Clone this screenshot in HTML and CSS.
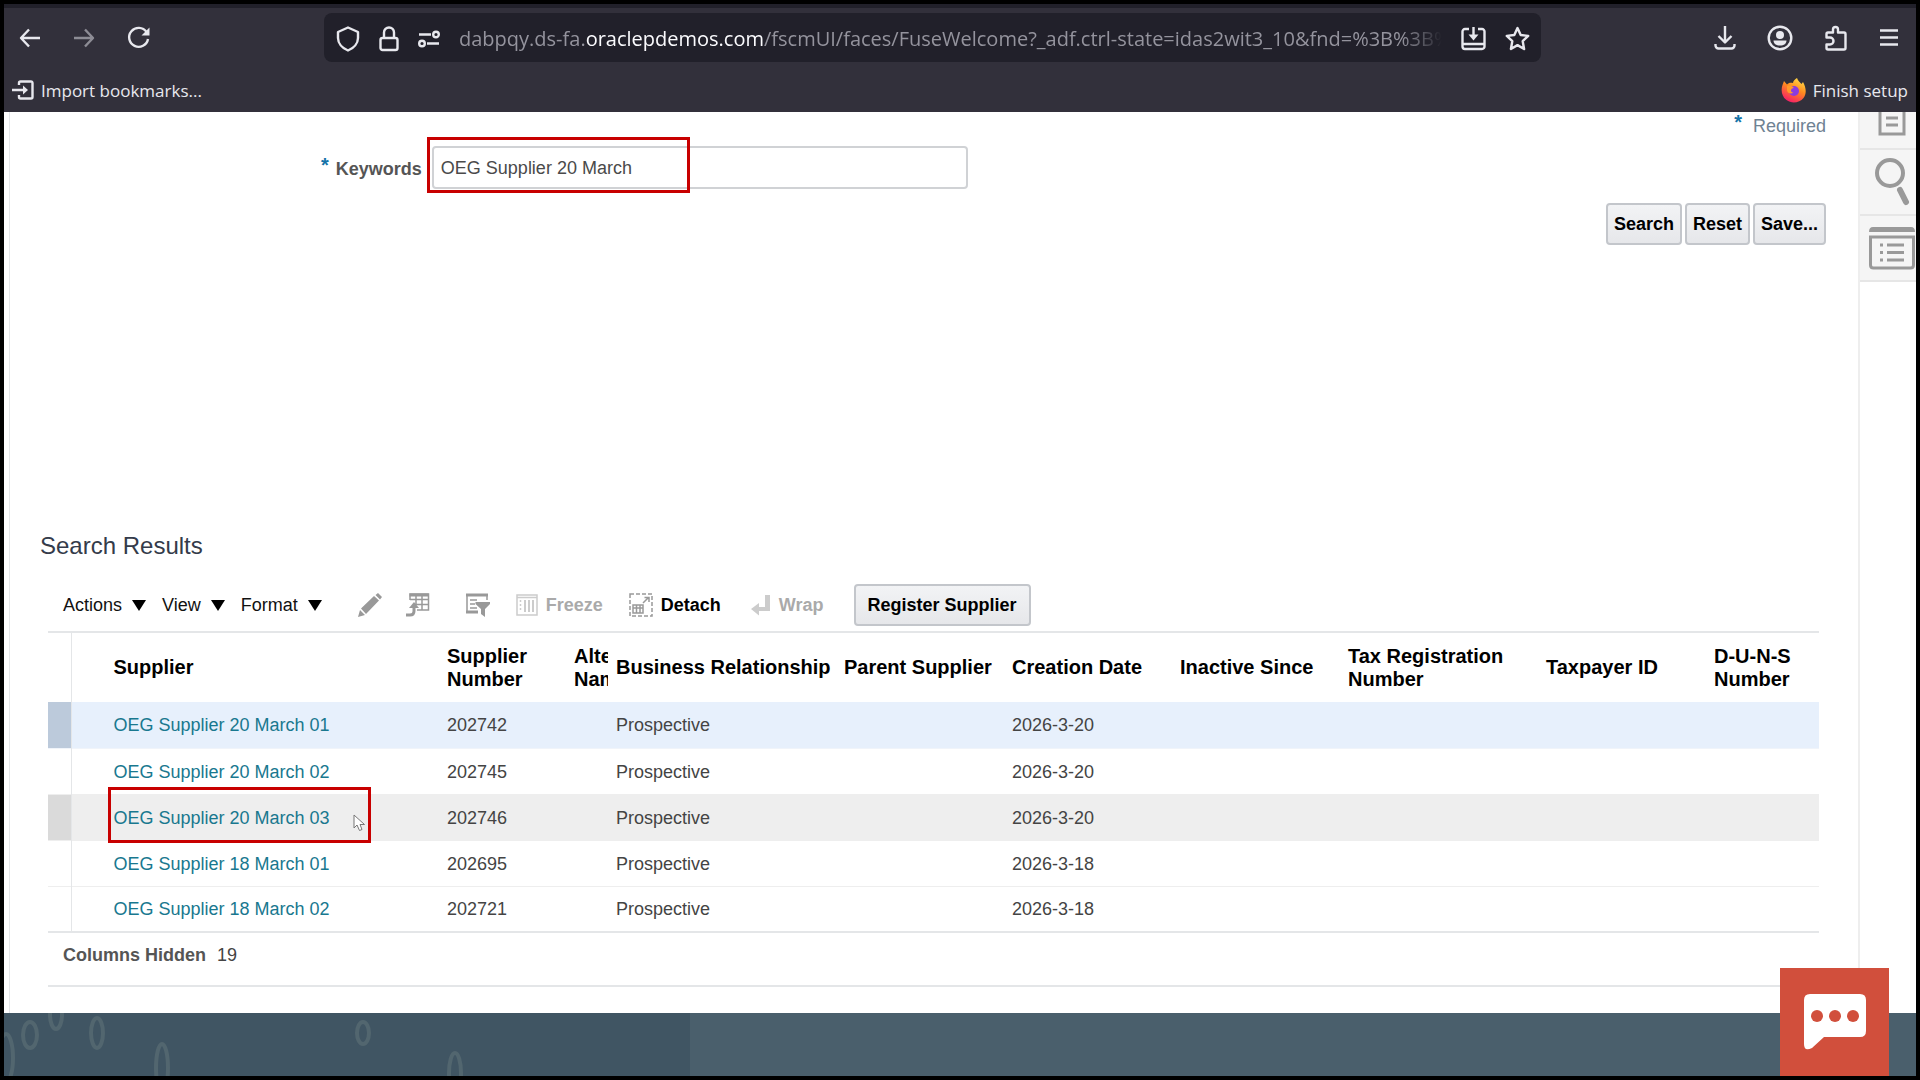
FILE: index.html
```html
<!DOCTYPE html>
<html lang="en">
<head>
  <meta charset="UTF-8">
  <title>Manage Suppliers</title>
  <meta name="viewport" content="width=device-width, initial-scale=1">
  <link rel="stylesheet" href="styles.css">
</head>
<body>

<div class="window">

  <header class="browser">
    <div class="nav-bar">
      <div class="nav-buttons">
        <button class="icon-btn" aria-label="Back">
          <svg width="22" height="24" viewBox="0 0 22 24"><path d="M21 12H2M10 3.5L2 12l8 8.5"/></svg>
        </button>
        <button class="icon-btn dim" aria-label="Forward">
          <svg width="22" height="24" viewBox="0 0 22 24"><path d="M1 12h19M12 3.5l8 8.5-8 8.5"/></svg>
        </button>
        <button class="icon-btn" aria-label="Reload">
          <svg width="24" height="24" viewBox="0 0 24 24"><path d="M19.500 6A9.500 9.500 0 1 0 21 13"/><path class="solid" d="M22.500 1.500v8h-8z"/></svg>
        </button>
      </div>

      <div class="url-bar">
        <svg width="24" height="26" viewBox="0 0 24 26"><path d="M12 1.500L22 6v6c0 5-4 10-10 12.500C6 22 2 17 2 12V6z"/></svg>
        <svg width="20" height="26" viewBox="0 0 20 26"><rect x="1.500" y="12" width="17" height="12" rx="2"/><path d="M5 12V6.500a5 5 0 0 1 10 0V12"/></svg>
        <svg width="22" height="26" viewBox="0 0 22 26"><path d="M1 8.500h12M9 17.500h12"/><circle cx="18" cy="8.500" r="2.800"/><circle cx="4" cy="17.500" r="2.800"/></svg>
        <div class="url">dabpqy.ds-fa.<b>oraclepdemos.com</b>/fscmUI/faces/FuseWelcome?_adf.ctrl-state=idas2wit3_10&amp;fnd=%3B%3B%3</div>
        <button class="icon-btn" aria-label="Install">
          <svg width="25" height="26" viewBox="0 0 25 26"><path d="M8 3H4a2.500 2.500 0 0 0-2.500 2.500v15A2.500 2.500 0 0 0 4 23h17a2.500 2.500 0 0 0 2.500-2.500v-15A2.500 2.500 0 0 0 21 3h-4M1.500 18h22M12.500 1v10"/><path class="solid" d="M7.500 8.500h10l-5 6z"/></svg>
        </button>
        <button class="icon-btn" aria-label="Bookmark this page">
          <svg width="25" height="26" viewBox="0 0 25 26"><path d="M12.500 2l3.200 7 7.500.9-5.500 5.300 1.400 7.800-6.600-3.900L5.900 23l1.400-7.800L1.800 9.900l7.500-.9z"/></svg>
        </button>
      </div>

      <div class="tools">
        <button class="icon-btn" aria-label="Downloads">
          <svg width="22" height="26" viewBox="0 0 22 26"><path d="M11 1v16M4.500 11l6.500 6.500 6.500-6.500M1.500 19v1.500a3 3 0 0 0 3 3h13a3 3 0 0 0 3-3V19"/></svg>
        </button>
        <button class="icon-btn" aria-label="Account">
          <svg width="26" height="26" viewBox="0 0 26 26"><circle cx="13" cy="13" r="11.300"/><circle class="solid" cx="13" cy="10" r="4"/><path class="solid" d="M6.500 15.500h13c0 3-2.500 5-6.500 5s-6.500-2-6.500-5z"/></svg>
        </button>
        <button class="icon-btn" aria-label="Extensions">
          <svg width="24" height="26" viewBox="0 0 24 26"><path d="M2.500 12.500V9A1.500 1.500 0 0 1 4 7.500h5V4.500a2.500 2.500 0 0 1 5 0v3h6A1.500 1.500 0 0 1 21.500 9v14A1.500 1.500 0 0 1 20 24.500H4A1.500 1.500 0 0 1 2.500 23v-3.500H6a3 3 0 0 0 0-7z"/></svg>
        </button>
        <button class="icon-btn" aria-label="Menu">
          <svg width="20" height="26" viewBox="0 0 20 26"><path d="M1 5.500h18M1 12.500h18M1 19.500h18"/></svg>
        </button>
      </div>
    </div>

    <div class="bookmarks">
      <a href="#">
        <svg width="22" height="20" viewBox="0 0 22 20"><path d="M7 5V3a1.500 1.500 0 0 1 1.500-1.500h10A1.500 1.500 0 0 1 20.500 3v14a1.500 1.500 0 0 1-1.500 1.500H8.500A1.500 1.500 0 0 1 7 17v-2M0 10h12"/><path class="solid" d="M11 5.500l5 4.500-5 4.500z"/></svg>
        Import bookmarks...
      </a>
      <a href="#">
        <svg class="firefox" width="25" height="25" viewBox="0 0 25 25">
          <defs>
            <linearGradient id="flame" x1="0.800" y1="0" x2="0.300" y2="1">
              <stop offset="0" stop-color="#ffe14a"/>
              <stop offset="0.450" stop-color="#ff8a1f"/>
              <stop offset="1" stop-color="#f5196a"/>
            </linearGradient>
          </defs>
          <path fill="url(#flame)" d="M16 0c1 3 3 4 4.500 6L22 4c3 5 4 12 .5 16-4 5-12 6-17 2C0 18 0 11 1.500 7L3 3l3 3.500C7.500 5 9 4.500 12 5c0-2 2-4 4-5z"/>
          <circle cx="13" cy="13" r="5" fill="#8a3be0"/>
          <path fill="#ff9a2a" d="M6 8c3-1 5 0 7 2-2 0-3 1-3 2.500 0 1.500 1 2 2.500 2-2 2-6 1-6.500-2z"/>
        </svg>
        Finish setup
      </a>
    </div>
  </header>

  <div class="page">
    <main class="content">
      <p class="required"><span class="star">*</span> Required</p>

      <form class="search-form">
        <div class="field">
          <label for="keywords"><span class="star">*</span> Keywords</label>
          <div class="input-wrap">
            <input type="text" id="keywords" value="OEG Supplier 20 March">
            <span class="marker"></span>
          </div>
        </div>
        <div class="form-buttons">
          <button type="button" class="btn">Search</button>
          <button type="button" class="btn">Reset</button>
          <button type="button" class="btn">Save...</button>
        </div>
      </form>

      <section class="results">
        <h2>Search Results</h2>

        <div class="toolbar">
          <div class="menus">
            <button class="menu">Actions</button>
            <button class="menu">View</button>
            <button class="menu">Format</button>
          </div>
          <button class="tool edit" aria-label="Edit">
            <svg width="24" height="24" viewBox="0 0 24 24" fill="#999"><path d="M0 24l2-7 5 5zM3 15.500L16 3l5 4.500L8 21zM17.500 2L20 0l4 4-2 2.500z"/></svg>
          </button>
          <button class="tool export" aria-label="Export to Excel">
            <svg width="24" height="24" viewBox="0 0 24 24" fill="none" stroke="#999" stroke-width="1.500"><path d="M4 7V1h18.500v16H11M4 6.500h18.500M10 1v10M16 1v16M9 11.500h13.500"/><path stroke-width="3" d="M3.500 2h19M0 22h4c3 0 4-1.500 4-4v-4"/><path fill="#999" stroke="none" d="M3 15l5-6 5 6z"/></svg>
          </button>
          <button class="tool query" aria-label="Query by Example">
            <svg width="24" height="24" viewBox="0 0 24 24" fill="none" stroke="#999" stroke-width="1.500"><path d="M1 1v18h11M21 1v6M4 7h7M4 11h5M4 15h7"/><path stroke-width="3" d="M0 2h22M0 19h12"/><path fill="#999" stroke="none" d="M9.500 9H24v2l-5 5v8l-4-3v-5l-5.500-5z"/></svg>
          </button>
          <button class="tool freeze" disabled>
            <svg width="22" height="22" viewBox="0 0 22 22" fill="none" stroke="#ccc" stroke-width="1.500"><path d="M1 1h20v20H1zM1 3.500h20"/><path d="M4.500 6v12" stroke-dasharray="2 2"/><path stroke-width="2" d="M9 6v12M13 6v12M17 6v12"/></svg>
            Freeze
          </button>
          <button class="tool detach">
            <svg width="24" height="24" viewBox="0 0 24 24" fill="none" stroke="#999" stroke-width="1.500"><path stroke-dasharray="4 2" d="M1 1h22v22H1z"/><path d="M4 12h10v8H4zM4 15h10M7.500 12v8M11 12v8M14 10l5-5M15.500 4.500H20V9"/></svg>
            Detach
          </button>
          <button class="tool wrap" disabled>
            <svg width="20" height="22" viewBox="0 0 20 22" fill="#ccc"><path d="M14 1h5v16H8v4.500L0 15l8-6v4h6z"/></svg>
            Wrap
          </button>
          <button class="btn register">Register Supplier</button>
        </div>

        <table>
          <colgroup>
            <col class="col-mark">
            <col class="col-supplier">
            <col class="col-number">
            <col class="col-alt">
            <col class="col-business">
            <col class="col-mid">
            <col class="col-mid">
            <col class="col-mid">
            <col class="col-tax">
            <col class="col-mid">
            <col class="col-duns">
          </colgroup>
          <thead>
            <tr>
              <td></td>
              <th>Supplier</th>
              <th>Supplier Number</th>
              <th>Alternate Name</th>
              <th>Business Relationship</th>
              <th>Parent Supplier</th>
              <th>Creation Date</th>
              <th>Inactive Since</th>
              <th>Tax Registration Number</th>
              <th>Taxpayer ID</th>
              <th>D-U-N-S Number</th>
            </tr>
          </thead>
          <tbody>
            <tr class="selected">
              <td></td>
              <td><a href="#">OEG Supplier 20 March 01</a></td>
              <td>202742</td>
              <td></td>
              <td>Prospective</td>
              <td></td>
              <td>2026-3-20</td>
              <td></td><td></td><td></td><td></td>
            </tr>
            <tr>
              <td></td>
              <td><a href="#">OEG Supplier 20 March 02</a></td>
              <td>202745</td>
              <td></td>
              <td>Prospective</td>
              <td></td>
              <td>2026-3-20</td>
              <td></td><td></td><td></td><td></td>
            </tr>
            <tr class="hovered">
              <td></td>
              <td>
                <a href="#">OEG Supplier 20 March 03</a>
                <span class="marker"></span>
                <svg class="cursor" width="13" height="18" viewBox="0 0 13 18"><path d="M1 1v13l3-3 2.500 5.500 2.500-1L7 10.500h4.500z" fill="#fff" stroke="#777"/></svg>
              </td>
              <td>202746</td>
              <td></td>
              <td>Prospective</td>
              <td></td>
              <td>2026-3-20</td>
              <td></td><td></td><td></td><td></td>
            </tr>
            <tr>
              <td></td>
              <td><a href="#">OEG Supplier 18 March 01</a></td>
              <td>202695</td>
              <td></td>
              <td>Prospective</td>
              <td></td>
              <td>2026-3-18</td>
              <td></td><td></td><td></td><td></td>
            </tr>
            <tr>
              <td></td>
              <td><a href="#">OEG Supplier 18 March 02</a></td>
              <td>202721</td>
              <td></td>
              <td>Prospective</td>
              <td></td>
              <td>2026-3-18</td>
              <td></td><td></td><td></td><td></td>
            </tr>
          </tbody>
        </table>

        <p class="hidden-cols"><b>Columns Hidden</b> 19</p>
      </section>
    </main>

    <aside class="rail">
      <button aria-label="Notes">
        <svg width="28" height="24" viewBox="0 0 28 24" fill="none" stroke="#999" stroke-width="3"><path d="M2 0v22h24V0M8 6h12M8 13h12"/></svg>
      </button>
      <button aria-label="Search">
        <svg width="36" height="48" viewBox="0 0 36 48" fill="none" stroke="#999" stroke-width="4"><circle cx="16" cy="15" r="13"/><path stroke-width="6" stroke-linecap="round" d="M26 32l6 12"/></svg>
      </button>
      <button aria-label="Worklist">
        <svg width="46" height="44" viewBox="0 0 46 44" fill="none" stroke="#999" stroke-width="3"><path fill="#999" stroke="none" d="M0 6q0-5 4-5h38q4 0 4 5z"/><path d="M1.500 11h43v28q0 3-3 3h-37q-3 0-3-3zM18 19h17M18 26.500h17M18 34h17M11 19h3M11 26.500h3M11 34h3"/></svg>
      </button>
    </aside>
  </div>

  <footer class="backdrop">
    <svg width="480" height="63" viewBox="0 0 480 63" fill="none" stroke="#52666f" stroke-width="4">
      <ellipse cx="2" cy="45" rx="7" ry="24"/>
      <ellipse cx="26" cy="22" rx="7" ry="13"/>
      <ellipse cx="52" cy="2" rx="6" ry="14"/>
      <ellipse cx="93" cy="20" rx="6" ry="15"/>
      <ellipse cx="158" cy="55" rx="6" ry="24"/>
      <ellipse cx="359" cy="20" rx="6" ry="11"/>
      <ellipse cx="451" cy="60" rx="6" ry="20"/>
    </svg>
  </footer>

  <button class="chat" aria-label="Open chat">
    <svg width="62" height="56" viewBox="0 0 62 56"><path fill="#fff" d="M6 0h50q6 0 6 6v31q0 6-6 6H20L8 54q-8 4-8-4V6q0-6 6-6z"/><g fill="#d14f3c"><circle cx="13" cy="22" r="6"/><circle cx="31" cy="22" r="6"/><circle cx="49" cy="22" r="6"/></g></svg>
  </button>

</div>

</body>
</html>
```
FILE: styles.css
```css
:root {
  --chrome: #32303b;
  --chrome-dark: #21202a;
  --chrome-text: #e8e8ee;
  --link: #19788f;
  --text: #444;
  --line: #e4e6e8;
  --mark: #c80000;
}

* {
  box-sizing: border-box;
}

body {
  margin: 0;
  padding: 4px;
  min-height: 100vh;
  display: flex;
  background-color: #000;
  color: var(--text);
  font-family: "Liberation Sans", Arial, sans-serif;
  font-size: 18px;
}

button {
  padding: 0;
  border: none;
  background: none;
  font: inherit;
  color: inherit;
  cursor: pointer;
}

svg {
  display: block;
  flex: none;
}

p, h2 {
  margin: 0;
}

a {
  color: var(--link);
  text-decoration: none;
}

.window {
  position: relative;
  flex: 1;
  min-width: 0;
  display: flex;
  flex-direction: column;
  overflow: hidden;
}

/* browser chrome */

.browser {
  background-color: var(--chrome);
  border-top: 4px solid var(--chrome-dark);
  color: var(--chrome-text);
  font-family: "Open Sans", "Noto Sans", sans-serif;
}

.browser svg {
  fill: none;
  stroke: var(--chrome-text);
  stroke-width: 2.4;
  stroke-linejoin: round;
}

.browser .solid {
  fill: var(--chrome-text);
  stroke: none;
}

.browser .firefox {
  stroke: none;
}

.browser .dim {
  opacity: 0.5;
}

.nav-bar {
  display: flex;
  align-items: center;
  padding: 5px 17px 0 15px;
}

.nav-buttons {
  display: flex;
  gap: 32px;
  width: 305px;
}

.url-bar {
  flex: 1;
  min-width: 0;
  max-width: 1217px;
  height: 49px;
  display: flex;
  align-items: center;
  gap: 19px;
  padding: 2px 11px 0 12px;
  border-radius: 8px;
  background-color: var(--chrome-dark);
}

.url {
  flex: 1;
  min-width: 0;
  overflow: hidden;
  white-space: nowrap;
  font-size: 20px;
  color: #94939d;
  mask-image: linear-gradient(to right, #000 calc(100% - 40px), transparent);
}

.url b {
  font-weight: normal;
  color: #fbfbfe;
}

.tools {
  display: flex;
  gap: 31px;
  margin-left: auto;
}

.bookmarks {
  display: flex;
  justify-content: space-between;
  align-items: center;
  height: 50px;
  padding: 6px 8px 0;
  font-size: 17px;
}

.bookmarks a {
  display: flex;
  align-items: center;
  gap: 7px;
  color: var(--chrome-text);
}

/* page */

.page {
  flex: 1;
  display: flex;
  padding-left: 5px;
  background-color: #fff;
}

.content {
  flex: 1;
  min-width: 0;
  border-left: 1px solid var(--line);
  border-right: 2px solid #eee;
  padding: 0 32px 0 30px;
}

.star {
  color: #1573a8;
  font-size: 20px;
  font-weight: bold;
  line-height: 1;
  vertical-align: 3px;
  margin-right: 2px;
}

.required {
  height: 25px;
  line-height: 26px;
  text-align: right;
  color: #6f8293;
}

.required .star {
  margin-right: 6px;
}

.field {
  display: flex;
  align-items: center;
  gap: 10px;
  margin: 9px 0 14px 281px;
}

.field label {
  font-weight: bold;
  color: #555;
}

.input-wrap {
  position: relative;
  flex: 0 1 536px;
}

.input-wrap input {
  display: block;
  width: 100%;
  height: 43px;
  padding: 2px 7px 0;
  border: 2px solid #d0d2d5;
  border-radius: 4px;
  font: inherit;
  color: #4a4a4a;
}

.marker {
  position: absolute;
  top: -9px;
  left: -5px;
  width: 263px;
  height: 56px;
  border: 3px solid var(--mark);
  pointer-events: none;
}

.form-buttons {
  display: flex;
  justify-content: flex-end;
  gap: 3px;
}

.btn {
  height: 42px;
  padding: 0 6px;
  border: 2px solid #c3c6cb;
  border-radius: 4px;
  background: linear-gradient(#f2f3f5, #e6e7ea);
  font-weight: bold;
  color: #000;
}

.results {
  margin-top: 287px;
}

.results h2 {
  font-size: 24px;
  font-weight: normal;
  line-height: 28px;
  color: #343b4a;
}

.toolbar {
  display: flex;
  align-items: center;
  margin: 24px 0 5px 23px;
}

.menus {
  display: flex;
  gap: 16px;
  color: #111;
}

.menu::after {
  content: "";
  display: inline-block;
  margin-left: 10px;
  border: 7px solid transparent;
  border-top: 11px solid #000;
  border-bottom: none;
}

.tool {
  display: flex;
  align-items: center;
  gap: 8px;
  font-weight: bold;
  color: #000;
}

.tool:disabled {
  color: #aaa;
}

.edit {
  margin-left: 36px;
}

.export {
  margin-left: 24px;
}

.query {
  margin-left: 36px;
}

.freeze, .detach {
  margin-left: 26px;
}

.wrap, .register {
  margin-left: 30px;
}

.register {
  padding: 0 12px;
}

table {
  width: calc(100% - 15px);
  margin-left: 8px;
  table-layout: fixed;
  border-collapse: collapse;
  border-top: 2px solid var(--line);
  border-bottom: 2px solid var(--line);
}

.col-mark { width: 23px; }
.col-number { width: 127px; }
.col-alt { width: 42px; }
.col-business { width: 228px; }
.col-mid { width: 168px; }
.col-tax { width: 198px; }
.col-duns { width: 113px; }

th, td {
  padding: 0 0 0 8px;
  text-align: left;
}

th {
  height: 70px;
  font-size: 20px;
  line-height: 23px;
  color: #000;
  overflow: hidden;
}

tbody td {
  position: relative;
  height: 46px;
  padding-top: 2px;
}

tr > :nth-child(1) {
  border-right: 1px solid var(--line);
}

tr > :nth-child(2) {
  padding-left: 42px;
}

tbody tr:last-child {
  border-top: 1px solid #eee;
}

.selected {
  background-color: #e7f0fc;
  border-bottom: 1px solid #f0f4fa;
}

.selected td:first-child {
  background-color: #bccadb;
}

.hovered {
  background-color: #eee;
  border-top: 1px solid #eee;
  border-bottom: 1px solid #eee;
}

.hovered td:first-child {
  background-color: #dadada;
}

td .marker {
  left: 36px;
  top: -8px;
}

.cursor {
  position: absolute;
  top: 19px;
  left: 281px;
}

.hidden-cols {
  margin-left: 8px;
  padding: 10px 15px 18px;
  border-bottom: 2px solid var(--line);
  line-height: 24px;
}

.hidden-cols b {
  margin-right: 6px;
  color: #555;
}

/* right icon rail */

.rail {
  width: 56px;
}

.rail button {
  display: flex;
  justify-content: center;
  align-items: center;
  width: 100%;
  height: 66px;
  padding-left: 8px;
  background-color: #f5f5f5;
  border-bottom: 2px solid #e6e6e6;
}

.rail button:first-child {
  height: 38px;
  align-items: flex-start;
}

.backdrop {
  height: 63px;
  overflow: hidden;
  background: linear-gradient(to right, #405563 686px, #4a5f6c 686px);
}

.chat {
  position: absolute;
  right: 27px;
  bottom: 0;
  width: 109px;
  height: 108px;
  display: flex;
  justify-content: center;
  align-items: center;
  background-color: #d14f3c;
}
```
